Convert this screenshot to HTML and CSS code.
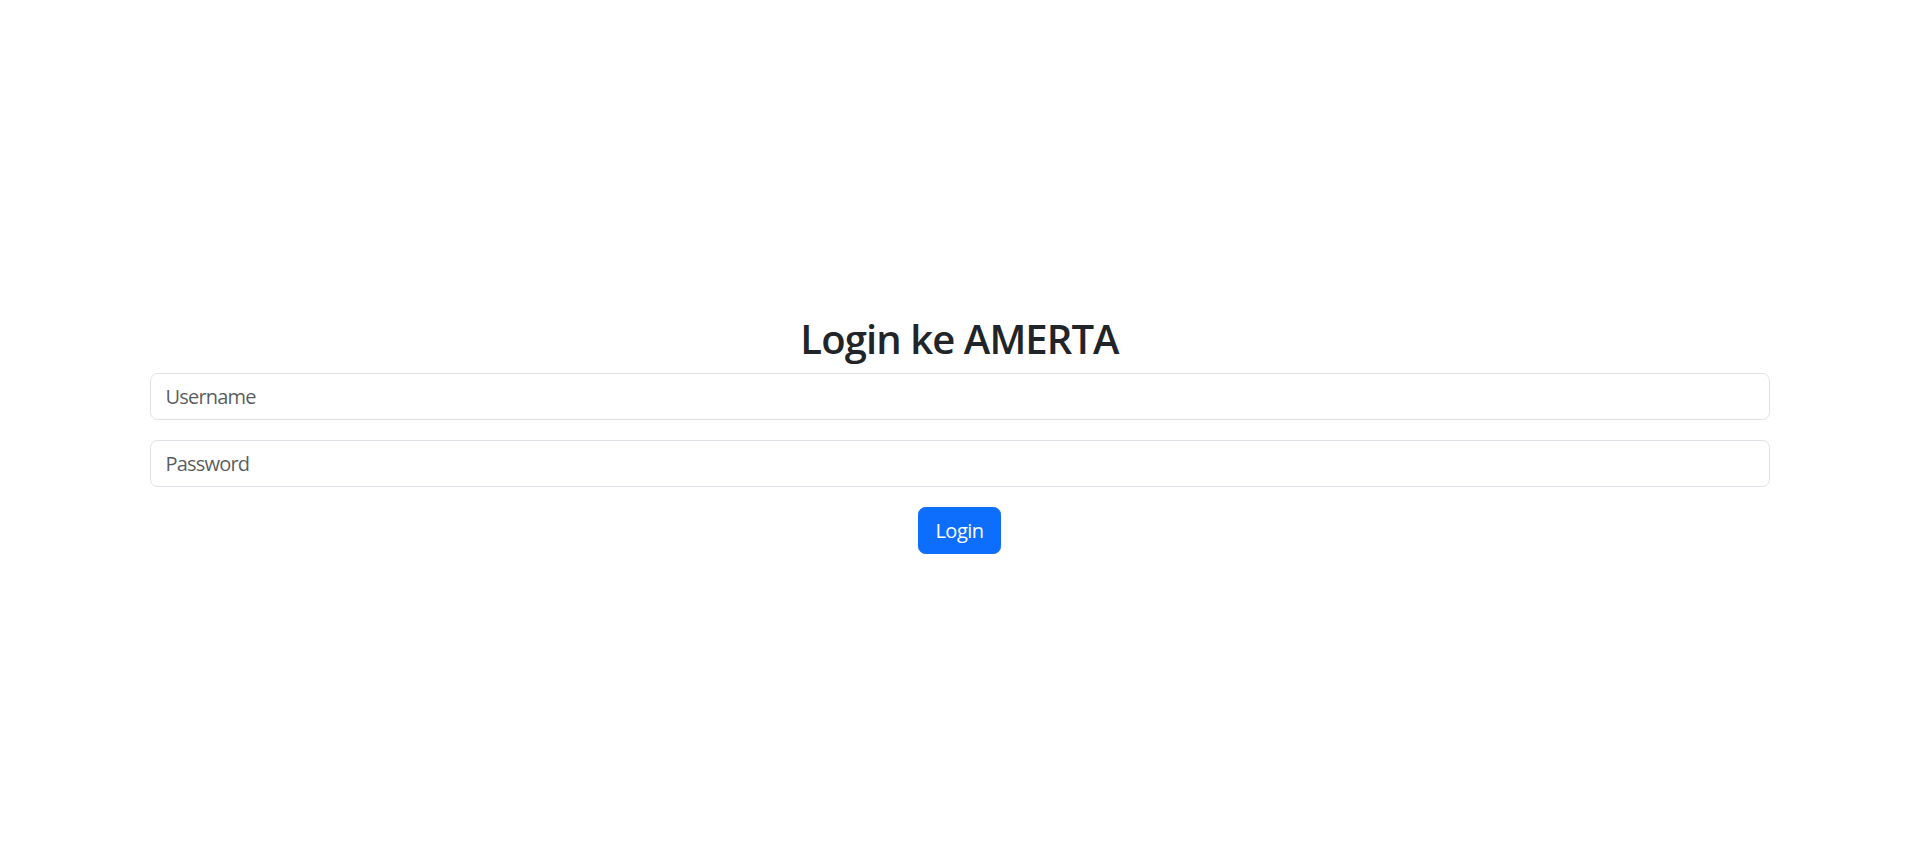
FILE: index.html
```html
<!DOCTYPE html>
<html lang="id">
<head>
<meta charset="utf-8">
<title>Login ke AMERTA</title>
<link rel="stylesheet" href="styles.css">
</head>
<body>
<main class="page">
  <div class="container">
    <h2 class="title">Login ke AMERTA</h2>
    <form class="login-form">
      <div class="field">
        <input class="form-control" type="text" placeholder="Username">
      </div>
      <div class="field">
        <input class="form-control" type="password" placeholder="Password">
      </div>
      <div class="actions">
        <button class="btn-primary" type="button">Login</button>
      </div>
    </form>
  </div>
</main>
</body>
</html>
```

FILE: styles.css
```css
* { box-sizing: border-box; }
html, body { margin: 0; padding: 0; background: #fff; }
body {
  font-family: "Open Sans", "Noto Sans", sans-serif;
  color: #212529;
  font-size: 20px;
  line-height: 1.5;
}
.page {
  min-height: 866px;
  padding-top: 3px;
  display: flex;
  align-items: center;
  justify-content: center;
}
.container {
  width: 1650px;
  padding: 0 15px;
}
.title {
  margin: 0 0 10px;
  font-size: 40px;
  font-weight: 600;
  line-height: 1.2;
  letter-spacing: -0.9px;
  text-align: center;
}
.login-form { margin: 0; }
.field { margin-bottom: 20px; }
.form-control {
  display: block;
  width: 100%;
  height: 47px;
  padding: 7.5px 15px;
  font-family: inherit;
  font-size: 20px;
  line-height: 1.5;
  letter-spacing: -0.8px;
  color: #212529;
  background: #fff;
  border: 1.25px solid #dee2e6;
  border-radius: 7.5px;
  outline: none;
}
.form-control::placeholder { color: rgba(33, 37, 41, 0.75); }
.actions { display: flex; justify-content: center; }
.btn-primary {
  height: 47px;
  padding: 7.5px 16px;
  font-family: inherit;
  font-size: 20px;
  line-height: 1.5;
  letter-spacing: -0.5px;
  color: #fff;
  background: #0d6efd;
  border: 1.25px solid #0d6efd;
  border-radius: 7.5px;
  cursor: pointer;
}
```
